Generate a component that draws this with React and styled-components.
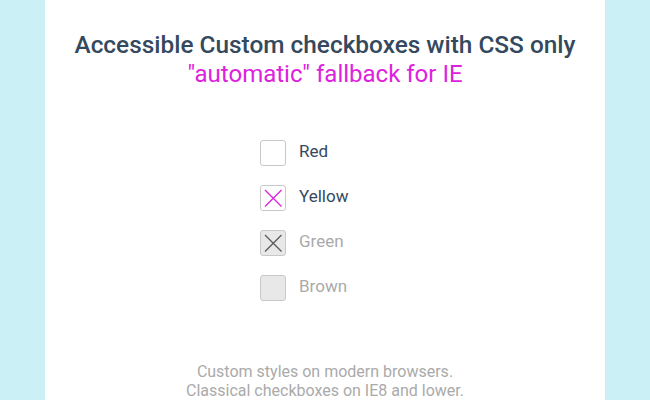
import React from "react";
import styled, { createGlobalStyle } from "styled-components";

const GlobalStyle = createGlobalStyle`
  html, body {
    margin: 0;
    padding: 0;
    background: #cbf1f6;
    font-family: Roboto, "Liberation Sans", sans-serif;
  }
`;

const items = [
  { label: "Red", checked: false, disabled: false },
  { label: "Yellow", checked: true, disabled: false },
  { label: "Green", checked: true, disabled: true },
  { label: "Brown", checked: false, disabled: true },
];

const Check = ({ label, checked, disabled }) => (
  <Row>
    <Box $disabled={disabled}>
      {checked && (
        <svg width="26" height="26" viewBox="0 0 26 26">
          <path
            d="M5 5 L21.5 21.5 M21.5 5 L5 21.5"
            stroke={disabled ? "#5a5a5a" : "#dd22dd"}
            strokeWidth="1.3"
            fill="none"
          />
        </svg>
      )}
    </Box>
    <Label $disabled={disabled}>{label}</Label>
  </Row>
);

const App = () => {
  return (
    <Page>
      <GlobalStyle />
      <Panel>
        <Title>Accessible Custom checkboxes with CSS only</Title>
        <Subtitle>"automatic" fallback for IE</Subtitle>
        <List>
          {items.map((it) => (
            <Check key={it.label} {...it} />
          ))}
        </List>
        <Note>
          Custom styles on modern browsers.
          <br />
          Classical checkboxes on IE8 and lower.
        </Note>
      </Panel>
    </Page>
  );
};

export default App;

const Page = styled.div`
  width: 650px;
  height: 400px;
  display: flex;
  justify-content: center;
  overflow: hidden;
`;
const Panel = styled.div`
  width: 560px;
  background: #fff;
  display: flex;
  flex-direction: column;
  align-items: center;
  padding-top: 30px;
  box-sizing: border-box;
`;
const Title = styled.h1`
  margin: 0;
  font-size: 24.4px;
  font-weight: 500;
  color: #34495e;
  line-height: 30px;
`;
const Subtitle = styled.div`
  font-size: 24px;
  color: #dd22dd;
  line-height: 28px;
`;
const List = styled.div`
  width: 130px;
  margin-top: 52px;
  display: flex;
  flex-direction: column;
  gap: 19px;
`;
const Row = styled.label`
  display: flex;
  align-items: center;
  gap: 13px;
  height: 26px;
`;
const Box = styled.span`
  width: 26px;
  height: 26px;
  box-sizing: border-box;
  border: 1px solid #c8c8c8;
  border-radius: 3px;
  background: ${(p) => (p.$disabled ? "#e8e8e8" : "#fff")};
  display: flex;
  align-items: center;
  justify-content: center;
  svg {
    margin: -1px;
  }
`;
const Label = styled.span`
  font-size: 17px;
  color: ${(p) => (p.$disabled ? "#aaa" : "#34495e")};
  margin-top: -4px;
`;
const Note = styled.p`
  margin: 61px 0 0;
  text-align: center;
  font-size: 16px;
  line-height: 19px;
  color: #aaa;
`;
